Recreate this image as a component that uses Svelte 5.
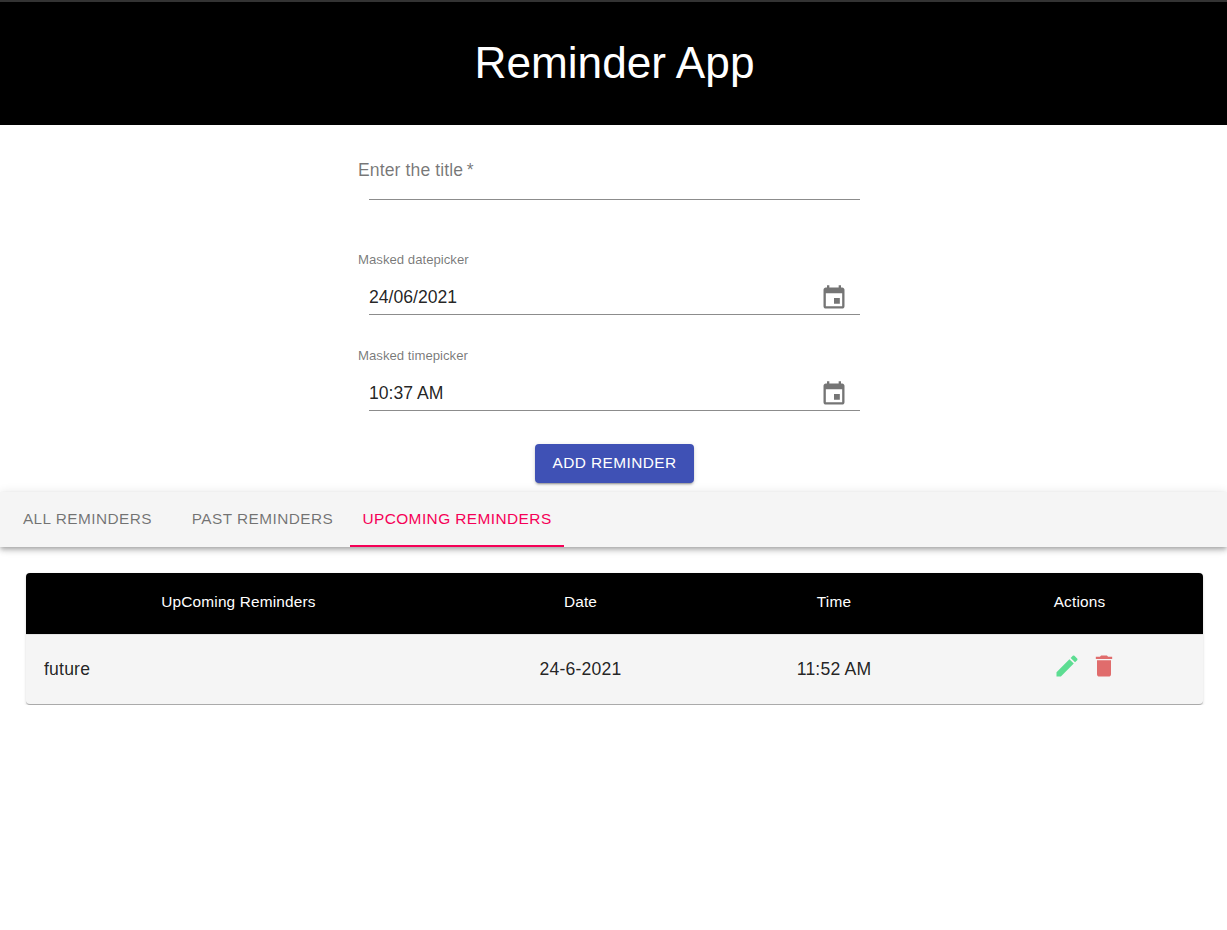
<script>
  const tabs = ['All Reminders', 'Past Reminders', 'Upcoming Reminders'];
  let active = 2;
  const eventIcon = 'M17 12h-5v5h5v-5zM16 1v2H8V1H6v2H5c-1.11 0-1.99.9-1.99 2L3 19c0 1.1.89 2 2 2h14c1.1 0 2-.9 2-2V5c0-1.1-.9-2-2-2h-1V1h-2zm3 18H5V8h14v11z';
  const rows = [{ title: 'future', date: '24-6-2021', time: '11:52 AM' }];
</script>

<header class="app-header">
  <h1>Reminder App</h1>
</header>

<form class="reminder-form" on:submit|preventDefault>
  <div class="field title-field">
    <div class="title-label">Enter the title&thinsp;*</div>
    <div class="input-line title-line"></div>
  </div>

  <div class="field date-field">
    <div class="small-label">Masked datepicker</div>
    <div class="input-line">
      <span class="value">24/06/2021</span>
      <svg class="picker-icon" viewBox="0 0 24 24"><path d={eventIcon} /></svg>
    </div>
  </div>

  <div class="field time-field">
    <div class="small-label">Masked timepicker</div>
    <div class="input-line">
      <span class="value">10:37 AM</span>
      <svg class="picker-icon" viewBox="0 0 24 24"><path d={eventIcon} /></svg>
    </div>
  </div>

  <button class="add-btn" type="submit">Add Reminder</button>
</form>

<nav class="tabs">
  {#each tabs as tab, i}
    <button class="tab" class:selected={i === active} on:click={() => (active = i)}>{tab}</button>
  {/each}
</nav>

<section class="table-wrap">
  <table>
    <thead>
      <tr>
        <th class="col-title">UpComing Reminders</th>
        <th class="col-date">Date</th>
        <th class="col-time">Time</th>
        <th class="col-actions">Actions</th>
      </tr>
    </thead>
    <tbody>
      {#each rows as row}
        <tr>
          <td class="left">{row.title}</td>
          <td>{row.date}</td>
          <td>{row.time}</td>
          <td class="actions">
            <svg class="edit" viewBox="0 0 24 24"><path d="M3 17.25V21h3.75L17.81 9.94l-3.75-3.75L3 17.25zM20.71 7.04c.39-.39.39-1.02 0-1.41l-2.34-2.34a.9959.9959 0 0 0-1.41 0l-1.83 1.83 3.75 3.75 1.83-1.83z" /></svg>
            <svg class="delete" viewBox="0 0 24 24"><path d="M6 19c0 1.1.9 2 2 2h8c1.1 0 2-.9 2-2V7H6v12zM19 4h-3.5l-1-1h-5l-1 1H5v2h14V4z" /></svg>
          </td>
        </tr>
      {/each}
    </tbody>
  </table>
</section>

<style>
  :global(body) {
    font-family: "Liberation Sans", Arial, sans-serif;
    background: #fff;
    color: rgba(0, 0, 0, 0.87);
  }

  .app-header {
    height: 121px;
    padding: 0 0 2px 2px;
    background: #000;
    border-top: 2px solid #333;
    display: flex;
    align-items: center;
    justify-content: center;
  }

  h1 {
    margin: 0;
    color: #fff;
    font-size: 44.2px;
    font-weight: 400;
  }

  .reminder-form {
    width: 513px;
    margin: 0 auto;
    padding-left: 2px;
    display: flex;
    flex-direction: column;
    align-items: center;
  }

  .field {
    width: 100%;
  }

  .title-label {
    padding-top: 36px;
    height: 38px;
    font-size: 17.6px;
    line-height: 19px;
    letter-spacing: 0.1px;
    color: rgba(0, 0, 0, 0.54);
  }

  .input-line {
    margin: 0 11px;
    height: 33px;
    border-bottom: 1px solid #8c8c8c;
    display: flex;
    align-items: center;
    justify-content: space-between;
    padding-right: 12px;
  }

  .title-line {
    height: 0;
  }

  .date-field {
    margin-top: 52px;
  }

  .time-field {
    margin-top: 33px;
  }

  .small-label {
    height: 29px;
    font-size: 13.2px;
    line-height: 15px;
    color: rgba(0, 0, 0, 0.54);
  }

  .value {
    font-size: 17.6px;
  }

  .picker-icon {
    width: 28px;
    height: 28px;
    fill: rgba(0, 0, 0, 0.54);
  }

  .add-btn {
    margin-top: 33px;
    width: 159px;
    height: 39px;
    padding: 0 0 2px;
    border: 0;
    border-radius: 4px;
    background: #3f51b5;
    color: #fff;
    font: inherit;
    font-size: 15.4px;
    letter-spacing: 0.02857em;
    text-transform: uppercase;
    box-shadow: 0 3px 1px -2px rgba(0, 0, 0, 0.2), 0 2px 2px 0 rgba(0, 0, 0, 0.14), 0 1px 5px 0 rgba(0, 0, 0, 0.12);
  }

  .tabs {
    margin-top: 9px;
    height: 55px;
    display: flex;
    background: #f5f5f5;
    box-shadow: 0 2px 4px -1px rgba(0, 0, 0, 0.2), 0 4px 5px 0 rgba(0, 0, 0, 0.14), 0 1px 10px 0 rgba(0, 0, 0, 0.12);
  }

  .tab {
    min-width: 175px;
    padding: 0 12px;
    border: 0;
    border-bottom: 2px solid transparent;
    background: none;
    font: inherit;
    font-size: 15.4px;
    letter-spacing: 0.02857em;
    text-transform: uppercase;
    color: rgba(0, 0, 0, 0.54);
  }

  .tab.selected {
    min-width: 214px;
    color: #f50057;
    border-bottom-color: #f50057;
  }

  .table-wrap {
    margin: 26px 24px 0 26px;
    border-radius: 4px;
    background: #f5f5f5;
    box-shadow: 0 1px 3px 0 rgba(0, 0, 0, 0.16);
  }

  table {
    width: 100%;
    border-collapse: separate;
    border-spacing: 0;
    table-layout: fixed;
  }

  th {
    height: 61px;
    padding: 0 0 3px;
    box-sizing: border-box;
    background: #000;
    color: #fff;
    font-size: 15.4px;
    font-weight: 400;
    letter-spacing: 0.01071em;
    text-align: center;
  }

  th:first-child {
    border-top-left-radius: 4px;
  }

  th:last-child {
    border-top-right-radius: 4px;
  }

  .col-title {
    width: 425px;
  }

  .col-date {
    width: 259px;
  }

  .col-time {
    width: 248px;
  }

  .col-actions {
    padding-right: 2px;
  }

  td {
    height: 71px;
    padding: 0;
    box-sizing: border-box;
    border-top: 1px solid #e4e4e4;
    border-bottom: 1px solid #aaa;
    font-size: 17.6px;
    letter-spacing: 0.01071em;
    text-align: center;
  }

  td:first-child {
    border-bottom-left-radius: 4px;
  }

  td:last-child {
    border-bottom-right-radius: 4px;
  }

  td.left {
    text-align: left;
    padding-left: 18px;
  }

  .actions {
    padding: 0 0 7px 10px;
  }

  .actions svg {
    width: 28px;
    height: 28px;
    vertical-align: middle;
  }

  .edit {
    fill: #5ddd92;
  }

  .delete {
    margin-left: 4px;
    fill: #e06c6c;
  }
</style>
